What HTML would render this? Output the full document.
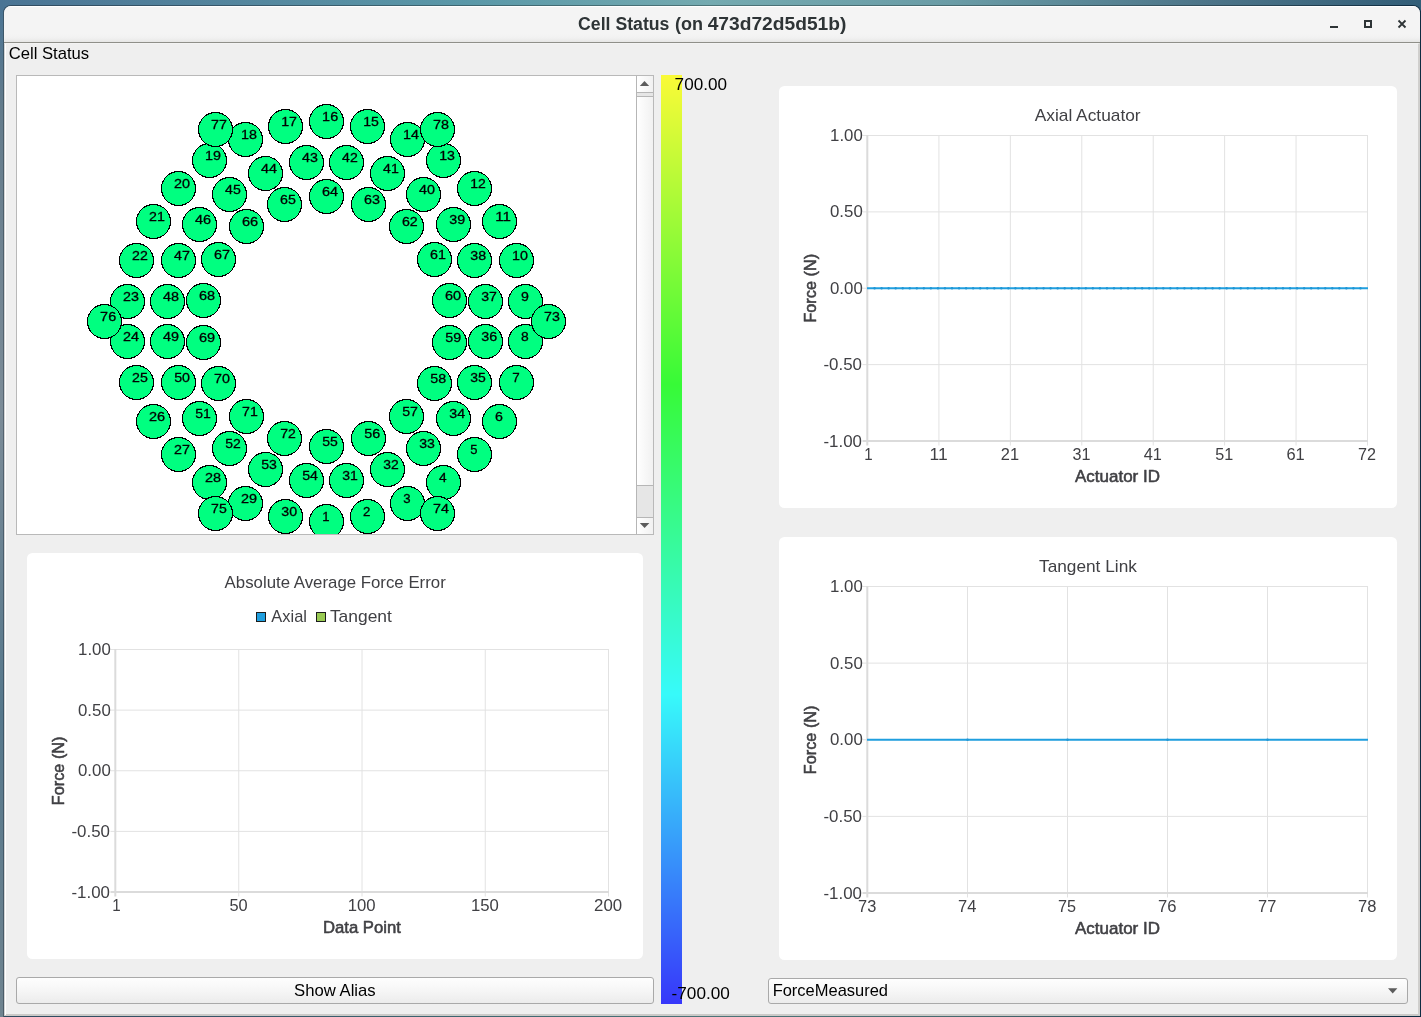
<!DOCTYPE html>
<html lang="en"><head><meta charset="utf-8"><title>Cell Status</title>
<style>
html,body{margin:0;padding:0}
body{width:1421px;height:1017px;overflow:hidden;position:relative;font-family:"Liberation Sans",sans-serif;
 background:linear-gradient(90deg,#4a7494 0%,#54869e 17%,#5a98a8 33%,#74aab0 50%,#6a9ca6 67%,#4c7488 85%,#325e78 100%)}
div,svg,header,main,nav,section{position:absolute;box-sizing:border-box;display:block}
svg{overflow:visible;will-change:transform}
svg text{font-family:"Liberation Sans",sans-serif;white-space:pre}
#leftstrip{left:0;top:6px;width:4px;height:1011px;background:linear-gradient(180deg,#4a7494 0%,#647c8c 10%,#7c8c98 40%,#56788c 70%,#708490 100%)}
#winshadow{left:3px;top:5px;width:1418px;height:1012px;border-radius:8px 8px 0 0;background:linear-gradient(90deg,#304b60 0%,#37576a 17%,#3d6670 33%,#4c7478 50%,#466a70 67%,#304c5a 85%,#0e2c42 100%)}
#winshadow .l{left:0;top:6px;width:1px;height:1006px;background:linear-gradient(180deg,#3a566a 0%,#485c68 10%,#566470 40%,#3c5668 70%,#4c5c68 100%)}
#winshadow .r{left:1417px;top:6px;width:1px;height:1006px;background:#0e2c42}
#winborder{left:1px;top:1px;width:1416px;height:1010px;border-radius:7px 7px 0 0;background:#efefef;overflow:hidden}
#titlebar{left:0;top:0;width:1416px;height:36px;background:linear-gradient(180deg,#fff 0,#fff 1px,#f4f4f4 1.5px,#f4f4f4 28px,#f1f1f1 32px,#e6e6e5 36px)}
#titleline{left:0;top:36px;width:1416px;height:1px;background:#8f8f89}
#client{left:0;top:37px;width:1416px;height:973px;background:#efefef;border-left:1px solid #d4d4d4;border-right:2px solid #d0cfcd;border-bottom:2px solid #cbcac8;border-top:1px solid #f3f3f3}
#client:before{content:"";position:absolute;left:0;top:0;width:1px;height:971px;background:#fff}
#gview{left:11px;top:31px;width:638px;height:460px;border:1px solid #b9b9b9;background:#fff;overflow:hidden}
#vsb{left:619px;top:0;width:17px;height:458px;border-left:1px solid #b6b6b6;background:#e6e6e6}
#vsb .btn{left:0;width:16px;height:16px;background:linear-gradient(90deg,#fff,#f1f1f1)}
#vsb .up{top:0}
#vsb .down{top:442px}
#vsb .ln{left:0;width:16px;height:1px;background:#b6b6b6}
#vsb .slider{left:0;top:20px;width:16px;height:390px;border-top:1px solid #b6b6b6;border-bottom:1px solid #b6b6b6;background:linear-gradient(90deg,#fff,#f1f1f1)}
#cbar{left:656px;top:31px;width:21px;height:929px;background:linear-gradient(180deg,#fafa37 0%,#37fa37 33.333%,#37fafa 66.667%,#3737fa 100%)}
.panel{background:#fff;border-radius:5.5px}
#p1{left:22px;top:509px;width:616px;height:406px}
#p2{left:774px;top:42px;width:618px;height:422px}
#p3{left:774px;top:493px;width:618px;height:423px}
.qbtn{border:1px solid #a9a9a9;border-radius:3px;background:linear-gradient(180deg,#fefefe 0%,#f6f6f6 50%,#ececec 100%)}
#showalias{left:11px;top:933px;width:638px;height:27px}
#combo{left:763px;top:934px;width:640px;height:26px}
#menubar{left:0;top:0;width:1409px;height:23px}
</style></head><body>

<div id="leftstrip"></div>
<div id="winshadow"><div class="l"></div><div class="r"></div><div id="winborder">
<header id="titlebar"><svg role="img" aria-label="Cell Status (on 473d72d5d51b)" style="left:-4px;top:-6px" width="1421" height="1017" viewBox="0 0 1421 1017"><text x="578.07" y="30.00" font-size="18" text-anchor="start" fill="#2e3436" font-weight="bold" textLength="91.35" lengthAdjust="spacingAndGlyphs">Cell Status</text>
<text x="675.00" y="30.00" font-size="18" text-anchor="start" fill="#2e3436" font-weight="bold" textLength="28.01" lengthAdjust="spacingAndGlyphs">(on</text>
<text x="707.71" y="30.00" font-size="18" text-anchor="start" fill="#2e3436" font-weight="bold" textLength="138.65" lengthAdjust="spacingAndGlyphs">473d72d5d51b)</text>
<g class="winbuttons"><rect x="1330" y="26" width="8" height="2" fill="#2e3436"/>
<rect x="1365" y="21" width="6" height="6" fill="none" stroke="#2e3436" stroke-width="2"/>
<path d="M1398.5 20.5 L1405.5 27.5 M1405.5 20.5 L1398.5 27.5" stroke="#2e3436" stroke-width="1.8" fill="none"/></g></svg></header>
<div id="titleline"></div>
<main id="client">
<nav id="menubar"><svg style="left:-5px;top:-44px" width="1421" height="1017" viewBox="0 0 1421 1017"><text x="8.65" y="59.00" font-size="16.6" text-anchor="start" fill="#000" font-weight="normal" textLength="80.55" lengthAdjust="spacingAndGlyphs">Cell Status</text></svg></nav>
<section id="gview">
<svg id="cells" style="left:0;top:0" width="619" height="458" viewBox="17 76 619 458">
<g shape-rendering="crispEdges" fill="#00ff80" stroke="#000" stroke-width="1">
<circle cx="326.5" cy="521.5" r="17"/>
<circle cx="367.5" cy="516.5" r="17"/>
<circle cx="407.5" cy="503.5" r="17"/>
<circle cx="443.5" cy="482.5" r="17"/>
<circle cx="474.5" cy="454.5" r="17"/>
<circle cx="499.5" cy="421.5" r="17"/>
<circle cx="516.5" cy="382.5" r="17"/>
<circle cx="525.5" cy="341.5" r="17"/>
<circle cx="525.5" cy="301.5" r="17"/>
<circle cx="516.5" cy="260.5" r="17"/>
<circle cx="499.5" cy="221.5" r="17"/>
<circle cx="474.5" cy="188.5" r="17"/>
<circle cx="443.5" cy="160.5" r="17"/>
<circle cx="407.5" cy="139.5" r="17"/>
<circle cx="367.5" cy="126.5" r="17"/>
<circle cx="326.5" cy="121.5" r="17"/>
<circle cx="285.5" cy="126.5" r="17"/>
<circle cx="245.5" cy="139.5" r="17"/>
<circle cx="209.5" cy="160.5" r="17"/>
<circle cx="178.5" cy="188.5" r="17"/>
<circle cx="153.5" cy="221.5" r="17"/>
<circle cx="136.5" cy="260.5" r="17"/>
<circle cx="127.5" cy="301.5" r="17"/>
<circle cx="127.5" cy="341.5" r="17"/>
<circle cx="136.5" cy="382.5" r="17"/>
<circle cx="153.5" cy="421.5" r="17"/>
<circle cx="178.5" cy="454.5" r="17"/>
<circle cx="209.5" cy="482.5" r="17"/>
<circle cx="245.5" cy="503.5" r="17"/>
<circle cx="285.5" cy="516.5" r="17"/>
<circle cx="346.5" cy="480.5" r="17"/>
<circle cx="387.5" cy="469.5" r="17"/>
<circle cx="423.5" cy="448.5" r="17"/>
<circle cx="453.5" cy="418.5" r="17"/>
<circle cx="474.5" cy="382.5" r="17"/>
<circle cx="485.5" cy="341.5" r="17"/>
<circle cx="485.5" cy="301.5" r="17"/>
<circle cx="474.5" cy="260.5" r="17"/>
<circle cx="453.5" cy="224.5" r="17"/>
<circle cx="423.5" cy="194.5" r="17"/>
<circle cx="387.5" cy="173.5" r="17"/>
<circle cx="346.5" cy="162.5" r="17"/>
<circle cx="306.5" cy="162.5" r="17"/>
<circle cx="265.5" cy="173.5" r="17"/>
<circle cx="229.5" cy="194.5" r="17"/>
<circle cx="199.5" cy="224.5" r="17"/>
<circle cx="178.5" cy="260.5" r="17"/>
<circle cx="167.5" cy="301.5" r="17"/>
<circle cx="167.5" cy="341.5" r="17"/>
<circle cx="178.5" cy="382.5" r="17"/>
<circle cx="199.5" cy="418.5" r="17"/>
<circle cx="229.5" cy="448.5" r="17"/>
<circle cx="265.5" cy="469.5" r="17"/>
<circle cx="306.5" cy="480.5" r="17"/>
<circle cx="326.5" cy="446.5" r="17"/>
<circle cx="368.5" cy="438.5" r="17"/>
<circle cx="406.5" cy="416.5" r="17"/>
<circle cx="434.5" cy="383.5" r="17"/>
<circle cx="449.5" cy="342.5" r="17"/>
<circle cx="449.5" cy="300.5" r="17"/>
<circle cx="434.5" cy="259.5" r="17"/>
<circle cx="406.5" cy="226.5" r="17"/>
<circle cx="368.5" cy="204.5" r="17"/>
<circle cx="326.5" cy="196.5" r="17"/>
<circle cx="284.5" cy="204.5" r="17"/>
<circle cx="246.5" cy="226.5" r="17"/>
<circle cx="218.5" cy="259.5" r="17"/>
<circle cx="203.5" cy="300.5" r="17"/>
<circle cx="203.5" cy="342.5" r="17"/>
<circle cx="218.5" cy="383.5" r="17"/>
<circle cx="246.5" cy="416.5" r="17"/>
<circle cx="284.5" cy="438.5" r="17"/>
<circle cx="548.5" cy="321.5" r="17"/>
<circle cx="437.5" cy="513.5" r="17"/>
<circle cx="215.5" cy="513.5" r="17"/>
<circle cx="104.5" cy="321.5" r="17"/>
<circle cx="215.5" cy="129.5" r="17"/>
<circle cx="437.5" cy="129.5" r="17"/>
</g>
<g fill="#000" stroke="#000" stroke-width="0.3">
<text x="322.23" y="521.00" font-size="12.9" text-anchor="start" fill="#000" font-weight="normal" textLength="7.28" lengthAdjust="spacingAndGlyphs">1</text>
<text x="363.09" y="516.00" font-size="12.9" text-anchor="start" fill="#000" font-weight="normal" textLength="7.35" lengthAdjust="spacingAndGlyphs">2</text>
<text x="403.29" y="503.00" font-size="12.9" text-anchor="start" fill="#000" font-weight="normal" textLength="7.32" lengthAdjust="spacingAndGlyphs">3</text>
<text x="439.12" y="482.00" font-size="12.9" text-anchor="start" fill="#000" font-weight="normal" textLength="7.62" lengthAdjust="spacingAndGlyphs">4</text>
<text x="470.29" y="454.00" font-size="12.9" text-anchor="start" fill="#000" font-weight="normal" textLength="7.19" lengthAdjust="spacingAndGlyphs">5</text>
<text x="494.99" y="421.00" font-size="12.9" text-anchor="start" fill="#000" font-weight="normal" textLength="7.89" lengthAdjust="spacingAndGlyphs">6</text>
<text x="512.18" y="382.00" font-size="12.9" text-anchor="start" fill="#000" font-weight="normal" textLength="7.46" lengthAdjust="spacingAndGlyphs">7</text>
<text x="521.08" y="341.00" font-size="12.9" text-anchor="start" fill="#000" font-weight="normal" textLength="7.70" lengthAdjust="spacingAndGlyphs">8</text>
<text x="520.96" y="301.00" font-size="12.9" text-anchor="start" fill="#000" font-weight="normal" textLength="7.87" lengthAdjust="spacingAndGlyphs">9</text>
<text x="512.14" y="260.00" font-size="12.9" text-anchor="start" fill="#000" font-weight="normal" textLength="15.90" lengthAdjust="spacingAndGlyphs">10</text>
<text x="495.15" y="221.00" font-size="12.9" text-anchor="start" fill="#000" font-weight="normal" textLength="15.68" lengthAdjust="spacingAndGlyphs">11</text>
<text x="470.16" y="188.00" font-size="12.9" text-anchor="start" fill="#000" font-weight="normal" textLength="15.58" lengthAdjust="spacingAndGlyphs">12</text>
<text x="439.15" y="160.00" font-size="12.9" text-anchor="start" fill="#000" font-weight="normal" textLength="15.78" lengthAdjust="spacingAndGlyphs">13</text>
<text x="403.14" y="139.00" font-size="12.9" text-anchor="start" fill="#000" font-weight="normal" textLength="15.89" lengthAdjust="spacingAndGlyphs">14</text>
<text x="363.16" y="126.00" font-size="12.9" text-anchor="start" fill="#000" font-weight="normal" textLength="15.64" lengthAdjust="spacingAndGlyphs">15</text>
<text x="322.13" y="121.00" font-size="12.9" text-anchor="start" fill="#000" font-weight="normal" textLength="16.03" lengthAdjust="spacingAndGlyphs">16</text>
<text x="281.15" y="126.00" font-size="12.9" text-anchor="start" fill="#000" font-weight="normal" textLength="15.80" lengthAdjust="spacingAndGlyphs">17</text>
<text x="241.14" y="139.00" font-size="12.9" text-anchor="start" fill="#000" font-weight="normal" textLength="15.94" lengthAdjust="spacingAndGlyphs">18</text>
<text x="205.13" y="160.00" font-size="12.9" text-anchor="start" fill="#000" font-weight="normal" textLength="15.97" lengthAdjust="spacingAndGlyphs">19</text>
<text x="174.03" y="188.00" font-size="12.9" text-anchor="start" fill="#000" font-weight="normal" textLength="16.01" lengthAdjust="spacingAndGlyphs">20</text>
<text x="149.04" y="221.00" font-size="12.9" text-anchor="start" fill="#000" font-weight="normal" textLength="15.80" lengthAdjust="spacingAndGlyphs">21</text>
<text x="132.04" y="260.00" font-size="12.9" text-anchor="start" fill="#000" font-weight="normal" textLength="15.71" lengthAdjust="spacingAndGlyphs">22</text>
<text x="123.03" y="301.00" font-size="12.9" text-anchor="start" fill="#000" font-weight="normal" textLength="15.90" lengthAdjust="spacingAndGlyphs">23</text>
<text x="123.03" y="341.00" font-size="12.9" text-anchor="start" fill="#000" font-weight="normal" textLength="16.01" lengthAdjust="spacingAndGlyphs">24</text>
<text x="132.04" y="382.00" font-size="12.9" text-anchor="start" fill="#000" font-weight="normal" textLength="15.76" lengthAdjust="spacingAndGlyphs">25</text>
<text x="149.02" y="421.00" font-size="12.9" text-anchor="start" fill="#000" font-weight="normal" textLength="16.14" lengthAdjust="spacingAndGlyphs">26</text>
<text x="174.03" y="454.00" font-size="12.9" text-anchor="start" fill="#000" font-weight="normal" textLength="15.92" lengthAdjust="spacingAndGlyphs">27</text>
<text x="205.03" y="482.00" font-size="12.9" text-anchor="start" fill="#000" font-weight="normal" textLength="16.05" lengthAdjust="spacingAndGlyphs">28</text>
<text x="241.02" y="503.00" font-size="12.9" text-anchor="start" fill="#000" font-weight="normal" textLength="16.09" lengthAdjust="spacingAndGlyphs">29</text>
<text x="281.25" y="516.00" font-size="12.9" text-anchor="start" fill="#000" font-weight="normal" textLength="15.78" lengthAdjust="spacingAndGlyphs">30</text>
<text x="342.26" y="480.00" font-size="12.9" text-anchor="start" fill="#000" font-weight="normal" textLength="15.57" lengthAdjust="spacingAndGlyphs">31</text>
<text x="383.26" y="469.00" font-size="12.9" text-anchor="start" fill="#000" font-weight="normal" textLength="15.48" lengthAdjust="spacingAndGlyphs">32</text>
<text x="419.25" y="448.00" font-size="12.9" text-anchor="start" fill="#000" font-weight="normal" textLength="15.67" lengthAdjust="spacingAndGlyphs">33</text>
<text x="449.25" y="418.00" font-size="12.9" text-anchor="start" fill="#000" font-weight="normal" textLength="15.78" lengthAdjust="spacingAndGlyphs">34</text>
<text x="470.26" y="382.00" font-size="12.9" text-anchor="start" fill="#000" font-weight="normal" textLength="15.53" lengthAdjust="spacingAndGlyphs">35</text>
<text x="481.25" y="341.00" font-size="12.9" text-anchor="start" fill="#000" font-weight="normal" textLength="15.91" lengthAdjust="spacingAndGlyphs">36</text>
<text x="481.25" y="301.00" font-size="12.9" text-anchor="start" fill="#000" font-weight="normal" textLength="15.69" lengthAdjust="spacingAndGlyphs">37</text>
<text x="470.25" y="260.00" font-size="12.9" text-anchor="start" fill="#000" font-weight="normal" textLength="15.82" lengthAdjust="spacingAndGlyphs">38</text>
<text x="449.25" y="224.00" font-size="12.9" text-anchor="start" fill="#000" font-weight="normal" textLength="15.86" lengthAdjust="spacingAndGlyphs">39</text>
<text x="419.11" y="194.00" font-size="12.9" text-anchor="start" fill="#000" font-weight="normal" textLength="15.93" lengthAdjust="spacingAndGlyphs">40</text>
<text x="383.11" y="173.00" font-size="12.9" text-anchor="start" fill="#000" font-weight="normal" textLength="15.72" lengthAdjust="spacingAndGlyphs">41</text>
<text x="342.11" y="162.00" font-size="12.9" text-anchor="start" fill="#000" font-weight="normal" textLength="15.64" lengthAdjust="spacingAndGlyphs">42</text>
<text x="302.11" y="162.00" font-size="12.9" text-anchor="start" fill="#000" font-weight="normal" textLength="15.82" lengthAdjust="spacingAndGlyphs">43</text>
<text x="261.11" y="173.00" font-size="12.9" text-anchor="start" fill="#000" font-weight="normal" textLength="15.93" lengthAdjust="spacingAndGlyphs">44</text>
<text x="225.11" y="194.00" font-size="12.9" text-anchor="start" fill="#000" font-weight="normal" textLength="15.69" lengthAdjust="spacingAndGlyphs">45</text>
<text x="195.10" y="224.00" font-size="12.9" text-anchor="start" fill="#000" font-weight="normal" textLength="16.05" lengthAdjust="spacingAndGlyphs">46</text>
<text x="174.11" y="260.00" font-size="12.9" text-anchor="start" fill="#000" font-weight="normal" textLength="15.84" lengthAdjust="spacingAndGlyphs">47</text>
<text x="163.11" y="301.00" font-size="12.9" text-anchor="start" fill="#000" font-weight="normal" textLength="15.97" lengthAdjust="spacingAndGlyphs">48</text>
<text x="163.10" y="341.00" font-size="12.9" text-anchor="start" fill="#000" font-weight="normal" textLength="16.00" lengthAdjust="spacingAndGlyphs">49</text>
<text x="174.23" y="382.00" font-size="12.9" text-anchor="start" fill="#000" font-weight="normal" textLength="15.80" lengthAdjust="spacingAndGlyphs">50</text>
<text x="195.24" y="418.00" font-size="12.9" text-anchor="start" fill="#000" font-weight="normal" textLength="15.58" lengthAdjust="spacingAndGlyphs">51</text>
<text x="225.25" y="448.00" font-size="12.9" text-anchor="start" fill="#000" font-weight="normal" textLength="15.50" lengthAdjust="spacingAndGlyphs">52</text>
<text x="261.24" y="469.00" font-size="12.9" text-anchor="start" fill="#000" font-weight="normal" textLength="15.68" lengthAdjust="spacingAndGlyphs">53</text>
<text x="302.23" y="480.00" font-size="12.9" text-anchor="start" fill="#000" font-weight="normal" textLength="15.79" lengthAdjust="spacingAndGlyphs">54</text>
<text x="322.24" y="446.00" font-size="12.9" text-anchor="start" fill="#000" font-weight="normal" textLength="15.55" lengthAdjust="spacingAndGlyphs">55</text>
<text x="364.23" y="438.00" font-size="12.9" text-anchor="start" fill="#000" font-weight="normal" textLength="15.92" lengthAdjust="spacingAndGlyphs">56</text>
<text x="402.24" y="416.00" font-size="12.9" text-anchor="start" fill="#000" font-weight="normal" textLength="15.70" lengthAdjust="spacingAndGlyphs">57</text>
<text x="430.23" y="383.00" font-size="12.9" text-anchor="start" fill="#000" font-weight="normal" textLength="15.84" lengthAdjust="spacingAndGlyphs">58</text>
<text x="445.23" y="342.00" font-size="12.9" text-anchor="start" fill="#000" font-weight="normal" textLength="15.87" lengthAdjust="spacingAndGlyphs">59</text>
<text x="444.97" y="300.00" font-size="12.9" text-anchor="start" fill="#000" font-weight="normal" textLength="16.07" lengthAdjust="spacingAndGlyphs">60</text>
<text x="429.98" y="259.00" font-size="12.9" text-anchor="start" fill="#000" font-weight="normal" textLength="15.85" lengthAdjust="spacingAndGlyphs">61</text>
<text x="401.99" y="226.00" font-size="12.9" text-anchor="start" fill="#000" font-weight="normal" textLength="15.77" lengthAdjust="spacingAndGlyphs">62</text>
<text x="363.98" y="204.00" font-size="12.9" text-anchor="start" fill="#000" font-weight="normal" textLength="15.95" lengthAdjust="spacingAndGlyphs">63</text>
<text x="321.97" y="196.00" font-size="12.9" text-anchor="start" fill="#000" font-weight="normal" textLength="16.06" lengthAdjust="spacingAndGlyphs">64</text>
<text x="279.99" y="204.00" font-size="12.9" text-anchor="start" fill="#000" font-weight="normal" textLength="15.82" lengthAdjust="spacingAndGlyphs">65</text>
<text x="241.97" y="226.00" font-size="12.9" text-anchor="start" fill="#000" font-weight="normal" textLength="16.19" lengthAdjust="spacingAndGlyphs">66</text>
<text x="213.98" y="259.00" font-size="12.9" text-anchor="start" fill="#000" font-weight="normal" textLength="15.98" lengthAdjust="spacingAndGlyphs">67</text>
<text x="198.97" y="300.00" font-size="12.9" text-anchor="start" fill="#000" font-weight="normal" textLength="16.11" lengthAdjust="spacingAndGlyphs">68</text>
<text x="198.97" y="342.00" font-size="12.9" text-anchor="start" fill="#000" font-weight="normal" textLength="16.14" lengthAdjust="spacingAndGlyphs">69</text>
<text x="214.13" y="383.00" font-size="12.9" text-anchor="start" fill="#000" font-weight="normal" textLength="15.90" lengthAdjust="spacingAndGlyphs">70</text>
<text x="242.14" y="416.00" font-size="12.9" text-anchor="start" fill="#000" font-weight="normal" textLength="15.69" lengthAdjust="spacingAndGlyphs">71</text>
<text x="280.15" y="438.00" font-size="12.9" text-anchor="start" fill="#000" font-weight="normal" textLength="15.60" lengthAdjust="spacingAndGlyphs">72</text>
<text x="544.14" y="321.00" font-size="12.9" text-anchor="start" fill="#000" font-weight="normal" textLength="15.79" lengthAdjust="spacingAndGlyphs">73</text>
<text x="433.13" y="513.00" font-size="12.9" text-anchor="start" fill="#000" font-weight="normal" textLength="15.90" lengthAdjust="spacingAndGlyphs">74</text>
<text x="211.14" y="513.00" font-size="12.9" text-anchor="start" fill="#000" font-weight="normal" textLength="15.65" lengthAdjust="spacingAndGlyphs">75</text>
<text x="100.13" y="321.00" font-size="12.9" text-anchor="start" fill="#000" font-weight="normal" textLength="16.03" lengthAdjust="spacingAndGlyphs">76</text>
<text x="211.14" y="129.00" font-size="12.9" text-anchor="start" fill="#000" font-weight="normal" textLength="15.81" lengthAdjust="spacingAndGlyphs">77</text>
<text x="433.13" y="129.00" font-size="12.9" text-anchor="start" fill="#000" font-weight="normal" textLength="15.94" lengthAdjust="spacingAndGlyphs">78</text>
</g></svg>
<div id="vsb"><div class="btn up"></div><div class="ln" style="top:16px"></div><div class="slider"></div><div class="ln" style="top:441px"></div><div class="btn down"></div><svg style="left:0;top:0" width="16" height="458"><path d="M2.8 10 L7.5 4.9 L12.2 10 Z" fill="#5c5c5c"/><path d="M2.8 447 L7.6 452.1 L12.4 447 Z" fill="#5c5c5c"/></svg></div>
</section>
<div id="cbar"><svg style="left:-661px;top:-75px" width="1421" height="1017" viewBox="0 0 1421 1017"><text x="674.62" y="90.00" font-size="16.6" text-anchor="start" fill="#000" font-weight="normal" textLength="52.35" lengthAdjust="spacingAndGlyphs">700.00</text><text x="671.54" y="999.00" font-size="16.6" text-anchor="start" fill="#000" font-weight="normal" textLength="58.34" lengthAdjust="spacingAndGlyphs">-700.00</text></svg></div>
<section class="panel" id="p1"><svg style="left:-27px;top:-553px" width="1421" height="1017" viewBox="0 0 1421 1017"><g class="grid" stroke-width="1" stroke="#e2e2e2">
<line x1="238.75" y1="649.00" x2="238.75" y2="896.50"/>
<line x1="362.00" y1="649.00" x2="362.00" y2="896.50"/>
<line x1="485.25" y1="649.00" x2="485.25" y2="896.50"/>
<line x1="608.50" y1="649.00" x2="608.50" y2="896.50"/>
<line x1="110.50" y1="649.50" x2="609.00" y2="649.50"/>
<line x1="110.50" y1="710.12" x2="609.00" y2="710.12"/>
<line x1="110.50" y1="770.75" x2="609.00" y2="770.75"/>
<line x1="110.50" y1="831.38" x2="609.00" y2="831.38"/>
</g>
<g class="axes" stroke-width="2" stroke="#dbdbdb">
<line x1="115.30" y1="649.00" x2="115.30" y2="896.50"/>
<line x1="110.50" y1="892.00" x2="609.00" y2="892.00"/>
</g>
<g class="labels" fill="#404044">
<text x="78.07" y="655.00" font-size="16.6" text-anchor="start" fill="#404044" font-weight="normal" textLength="32.69" lengthAdjust="spacingAndGlyphs">1.00</text>
<text x="78.03" y="716.00" font-size="16.6" text-anchor="start" fill="#404044" font-weight="normal" textLength="32.73" lengthAdjust="spacingAndGlyphs">0.50</text>
<text x="78.03" y="776.00" font-size="16.6" text-anchor="start" fill="#404044" font-weight="normal" textLength="32.73" lengthAdjust="spacingAndGlyphs">0.00</text>
<text x="71.47" y="837.00" font-size="16.6" text-anchor="start" fill="#404044" font-weight="normal" textLength="38.49" lengthAdjust="spacingAndGlyphs">-0.50</text>
<text x="71.47" y="898.00" font-size="16.6" text-anchor="start" fill="#404044" font-weight="normal" textLength="38.49" lengthAdjust="spacingAndGlyphs">-1.00</text>
<text x="112.13" y="911.00" font-size="16.6" text-anchor="start" fill="#404044" font-weight="normal" textLength="8.40" lengthAdjust="spacingAndGlyphs">1</text>
<text x="229.41" y="911.00" font-size="16.6" text-anchor="start" fill="#404044" font-weight="normal" textLength="18.23" lengthAdjust="spacingAndGlyphs">50</text>
<text x="347.76" y="911.00" font-size="16.6" text-anchor="start" fill="#404044" font-weight="normal" textLength="27.91" lengthAdjust="spacingAndGlyphs">100</text>
<text x="471.01" y="911.00" font-size="16.6" text-anchor="start" fill="#404044" font-weight="normal" textLength="27.91" lengthAdjust="spacingAndGlyphs">150</text>
<text x="594.14" y="911.00" font-size="16.6" text-anchor="start" fill="#404044" font-weight="normal" textLength="28.04" lengthAdjust="spacingAndGlyphs">200</text>
<text x="224.61" y="588.00" font-size="16.6" text-anchor="start" fill="#404044" font-weight="normal" textLength="221.14" lengthAdjust="spacingAndGlyphs">Absolute Average Force Error</text>
<text x="322.92" y="933.00" font-size="16.6" text-anchor="start" fill="#404044" font-weight="normal" textLength="78.02" lengthAdjust="spacingAndGlyphs" stroke="#404044" stroke-width="0.55" stroke-linejoin="round">Data Point</text>
<g transform="translate(64,770.8) rotate(-90)"><text x="-34.43" y="0.00" font-size="16.6" text-anchor="start" fill="#404044" font-weight="normal" textLength="68.72" lengthAdjust="spacingAndGlyphs" stroke="#404044" stroke-width="0.55" stroke-linejoin="round">Force (N)</text></g>
</g>
<g class="legend"><g shape-rendering="crispEdges"><rect x="256.5" y="612.5" width="9" height="9" fill="#209fdf" stroke="#1c1c1c"/><rect x="316.5" y="612.5" width="9" height="9" fill="#99ca53" stroke="#1c1c1c"/></g>
<text x="271.37" y="621.70" font-size="16.6" text-anchor="start" fill="#404044" font-weight="normal" textLength="35.53" lengthAdjust="spacingAndGlyphs">Axial</text>
<text x="329.92" y="621.70" font-size="16.6" text-anchor="start" fill="#404044" font-weight="normal" textLength="62.00" lengthAdjust="spacingAndGlyphs">Tangent</text></g></svg></section>
<section class="panel" id="p2"><svg style="left:-779px;top:-86px" width="1421" height="1017" viewBox="0 0 1421 1017"><g class="grid" stroke-width="1" stroke="#e2e2e2">
<line x1="938.93" y1="135.00" x2="938.93" y2="445.50"/>
<line x1="1010.36" y1="135.00" x2="1010.36" y2="445.50"/>
<line x1="1081.79" y1="135.00" x2="1081.79" y2="445.50"/>
<line x1="1153.21" y1="135.00" x2="1153.21" y2="445.50"/>
<line x1="1224.64" y1="135.00" x2="1224.64" y2="445.50"/>
<line x1="1296.07" y1="135.00" x2="1296.07" y2="445.50"/>
<line x1="1367.50" y1="135.00" x2="1367.50" y2="445.50"/>
<line x1="862.50" y1="135.50" x2="1368.00" y2="135.50"/>
<line x1="862.50" y1="211.88" x2="1368.00" y2="211.88"/>
<line x1="862.50" y1="288.25" x2="1368.00" y2="288.25"/>
<line x1="862.50" y1="364.62" x2="1368.00" y2="364.62"/>
</g>
<g class="axes" stroke-width="2" stroke="#dbdbdb">
<line x1="867.30" y1="135.00" x2="867.30" y2="445.50"/>
<line x1="862.50" y1="441.00" x2="1368.00" y2="441.00"/>
</g>
<g class="series">
<line x1="867.0" y1="288.25" x2="1368.0" y2="288.25" stroke="#209fdf" stroke-width="2"/>
<circle cx="874.54" cy="288.25" r="1.2" fill="#1f97d6"/>
<circle cx="881.58" cy="288.25" r="1.2" fill="#1f97d6"/>
<circle cx="888.63" cy="288.25" r="1.2" fill="#1f97d6"/>
<circle cx="895.67" cy="288.25" r="1.2" fill="#1f97d6"/>
<circle cx="902.71" cy="288.25" r="1.2" fill="#1f97d6"/>
<circle cx="909.75" cy="288.25" r="1.2" fill="#1f97d6"/>
<circle cx="916.80" cy="288.25" r="1.2" fill="#1f97d6"/>
<circle cx="923.84" cy="288.25" r="1.2" fill="#1f97d6"/>
<circle cx="930.88" cy="288.25" r="1.2" fill="#1f97d6"/>
<circle cx="937.92" cy="288.25" r="1.2" fill="#1f97d6"/>
<circle cx="944.96" cy="288.25" r="1.2" fill="#1f97d6"/>
<circle cx="952.01" cy="288.25" r="1.2" fill="#1f97d6"/>
<circle cx="959.05" cy="288.25" r="1.2" fill="#1f97d6"/>
<circle cx="966.09" cy="288.25" r="1.2" fill="#1f97d6"/>
<circle cx="973.13" cy="288.25" r="1.2" fill="#1f97d6"/>
<circle cx="980.18" cy="288.25" r="1.2" fill="#1f97d6"/>
<circle cx="987.22" cy="288.25" r="1.2" fill="#1f97d6"/>
<circle cx="994.26" cy="288.25" r="1.2" fill="#1f97d6"/>
<circle cx="1001.30" cy="288.25" r="1.2" fill="#1f97d6"/>
<circle cx="1008.35" cy="288.25" r="1.2" fill="#1f97d6"/>
<circle cx="1015.39" cy="288.25" r="1.2" fill="#1f97d6"/>
<circle cx="1022.43" cy="288.25" r="1.2" fill="#1f97d6"/>
<circle cx="1029.47" cy="288.25" r="1.2" fill="#1f97d6"/>
<circle cx="1036.51" cy="288.25" r="1.2" fill="#1f97d6"/>
<circle cx="1043.56" cy="288.25" r="1.2" fill="#1f97d6"/>
<circle cx="1050.60" cy="288.25" r="1.2" fill="#1f97d6"/>
<circle cx="1057.64" cy="288.25" r="1.2" fill="#1f97d6"/>
<circle cx="1064.68" cy="288.25" r="1.2" fill="#1f97d6"/>
<circle cx="1071.73" cy="288.25" r="1.2" fill="#1f97d6"/>
<circle cx="1078.77" cy="288.25" r="1.2" fill="#1f97d6"/>
<circle cx="1085.81" cy="288.25" r="1.2" fill="#1f97d6"/>
<circle cx="1092.85" cy="288.25" r="1.2" fill="#1f97d6"/>
<circle cx="1099.89" cy="288.25" r="1.2" fill="#1f97d6"/>
<circle cx="1106.94" cy="288.25" r="1.2" fill="#1f97d6"/>
<circle cx="1113.98" cy="288.25" r="1.2" fill="#1f97d6"/>
<circle cx="1121.02" cy="288.25" r="1.2" fill="#1f97d6"/>
<circle cx="1128.06" cy="288.25" r="1.2" fill="#1f97d6"/>
<circle cx="1135.11" cy="288.25" r="1.2" fill="#1f97d6"/>
<circle cx="1142.15" cy="288.25" r="1.2" fill="#1f97d6"/>
<circle cx="1149.19" cy="288.25" r="1.2" fill="#1f97d6"/>
<circle cx="1156.23" cy="288.25" r="1.2" fill="#1f97d6"/>
<circle cx="1163.27" cy="288.25" r="1.2" fill="#1f97d6"/>
<circle cx="1170.32" cy="288.25" r="1.2" fill="#1f97d6"/>
<circle cx="1177.36" cy="288.25" r="1.2" fill="#1f97d6"/>
<circle cx="1184.40" cy="288.25" r="1.2" fill="#1f97d6"/>
<circle cx="1191.44" cy="288.25" r="1.2" fill="#1f97d6"/>
<circle cx="1198.49" cy="288.25" r="1.2" fill="#1f97d6"/>
<circle cx="1205.53" cy="288.25" r="1.2" fill="#1f97d6"/>
<circle cx="1212.57" cy="288.25" r="1.2" fill="#1f97d6"/>
<circle cx="1219.61" cy="288.25" r="1.2" fill="#1f97d6"/>
<circle cx="1226.65" cy="288.25" r="1.2" fill="#1f97d6"/>
<circle cx="1233.70" cy="288.25" r="1.2" fill="#1f97d6"/>
<circle cx="1240.74" cy="288.25" r="1.2" fill="#1f97d6"/>
<circle cx="1247.78" cy="288.25" r="1.2" fill="#1f97d6"/>
<circle cx="1254.82" cy="288.25" r="1.2" fill="#1f97d6"/>
<circle cx="1261.87" cy="288.25" r="1.2" fill="#1f97d6"/>
<circle cx="1268.91" cy="288.25" r="1.2" fill="#1f97d6"/>
<circle cx="1275.95" cy="288.25" r="1.2" fill="#1f97d6"/>
<circle cx="1282.99" cy="288.25" r="1.2" fill="#1f97d6"/>
<circle cx="1290.04" cy="288.25" r="1.2" fill="#1f97d6"/>
<circle cx="1297.08" cy="288.25" r="1.2" fill="#1f97d6"/>
<circle cx="1304.12" cy="288.25" r="1.2" fill="#1f97d6"/>
<circle cx="1311.16" cy="288.25" r="1.2" fill="#1f97d6"/>
<circle cx="1318.20" cy="288.25" r="1.2" fill="#1f97d6"/>
<circle cx="1325.25" cy="288.25" r="1.2" fill="#1f97d6"/>
<circle cx="1332.29" cy="288.25" r="1.2" fill="#1f97d6"/>
<circle cx="1339.33" cy="288.25" r="1.2" fill="#1f97d6"/>
<circle cx="1346.37" cy="288.25" r="1.2" fill="#1f97d6"/>
<circle cx="1353.42" cy="288.25" r="1.2" fill="#1f97d6"/>
<circle cx="1360.46" cy="288.25" r="1.2" fill="#1f97d6"/>
</g>
<g class="labels" fill="#404044">
<text x="830.07" y="141.00" font-size="16.6" text-anchor="start" fill="#404044" font-weight="normal" textLength="32.69" lengthAdjust="spacingAndGlyphs">1.00</text>
<text x="830.03" y="217.00" font-size="16.6" text-anchor="start" fill="#404044" font-weight="normal" textLength="32.73" lengthAdjust="spacingAndGlyphs">0.50</text>
<text x="830.03" y="294.00" font-size="16.6" text-anchor="start" fill="#404044" font-weight="normal" textLength="32.73" lengthAdjust="spacingAndGlyphs">0.00</text>
<text x="823.47" y="370.00" font-size="16.6" text-anchor="start" fill="#404044" font-weight="normal" textLength="38.49" lengthAdjust="spacingAndGlyphs">-0.50</text>
<text x="823.47" y="447.00" font-size="16.6" text-anchor="start" fill="#404044" font-weight="normal" textLength="38.49" lengthAdjust="spacingAndGlyphs">-1.00</text>
<text x="864.13" y="460.00" font-size="16.6" text-anchor="start" fill="#404044" font-weight="normal" textLength="8.40" lengthAdjust="spacingAndGlyphs">1</text>
<text x="929.49" y="460.00" font-size="16.6" text-anchor="start" fill="#404044" font-weight="normal" textLength="18.09" lengthAdjust="spacingAndGlyphs">11</text>
<text x="1000.79" y="460.00" font-size="16.6" text-anchor="start" fill="#404044" font-weight="normal" textLength="18.23" lengthAdjust="spacingAndGlyphs">21</text>
<text x="1072.47" y="460.00" font-size="16.6" text-anchor="start" fill="#404044" font-weight="normal" textLength="17.96" lengthAdjust="spacingAndGlyphs">31</text>
<text x="1143.73" y="460.00" font-size="16.6" text-anchor="start" fill="#404044" font-weight="normal" textLength="18.14" lengthAdjust="spacingAndGlyphs">41</text>
<text x="1215.31" y="460.00" font-size="16.6" text-anchor="start" fill="#404044" font-weight="normal" textLength="17.98" lengthAdjust="spacingAndGlyphs">51</text>
<text x="1286.44" y="460.00" font-size="16.6" text-anchor="start" fill="#404044" font-weight="normal" textLength="18.29" lengthAdjust="spacingAndGlyphs">61</text>
<text x="1358.06" y="460.00" font-size="16.6" text-anchor="start" fill="#404044" font-weight="normal" textLength="18.00" lengthAdjust="spacingAndGlyphs">72</text>
<text x="1034.71" y="121.40" font-size="16.6" text-anchor="start" fill="#404044" font-weight="normal" textLength="105.95" lengthAdjust="spacingAndGlyphs">Axial Actuator</text>
<text x="1075.06" y="482.00" font-size="16.6" text-anchor="start" fill="#404044" font-weight="normal" textLength="84.90" lengthAdjust="spacingAndGlyphs" stroke="#404044" stroke-width="0.55" stroke-linejoin="round">Actuator ID</text>
<g transform="translate(816,288.2) rotate(-90)"><text x="-34.43" y="0.00" font-size="16.6" text-anchor="start" fill="#404044" font-weight="normal" textLength="68.72" lengthAdjust="spacingAndGlyphs" stroke="#404044" stroke-width="0.55" stroke-linejoin="round">Force (N)</text></g>
</g></svg></section>
<section class="panel" id="p3"><svg style="left:-779px;top:-537px" width="1421" height="1017" viewBox="0 0 1421 1017"><g class="grid" stroke-width="1" stroke="#e2e2e2">
<line x1="967.50" y1="586.00" x2="967.50" y2="897.50"/>
<line x1="1067.50" y1="586.00" x2="1067.50" y2="897.50"/>
<line x1="1167.50" y1="586.00" x2="1167.50" y2="897.50"/>
<line x1="1267.50" y1="586.00" x2="1267.50" y2="897.50"/>
<line x1="1367.50" y1="586.00" x2="1367.50" y2="897.50"/>
<line x1="862.50" y1="586.50" x2="1368.00" y2="586.50"/>
<line x1="862.50" y1="663.12" x2="1368.00" y2="663.12"/>
<line x1="862.50" y1="739.75" x2="1368.00" y2="739.75"/>
<line x1="862.50" y1="816.38" x2="1368.00" y2="816.38"/>
</g>
<g class="axes" stroke-width="2" stroke="#dbdbdb">
<line x1="867.30" y1="586.00" x2="867.30" y2="897.50"/>
<line x1="862.50" y1="893.00" x2="1368.00" y2="893.00"/>
</g>
<g class="series">
<line x1="867.0" y1="739.75" x2="1368.0" y2="739.75" stroke="#209fdf" stroke-width="2"/>
<circle cx="967.50" cy="739.75" r="1.2" fill="#1f97d6"/>
<circle cx="1067.50" cy="739.75" r="1.2" fill="#1f97d6"/>
<circle cx="1167.50" cy="739.75" r="1.2" fill="#1f97d6"/>
<circle cx="1267.50" cy="739.75" r="1.2" fill="#1f97d6"/>
</g>
<g class="labels" fill="#404044">
<text x="830.07" y="592.00" font-size="16.6" text-anchor="start" fill="#404044" font-weight="normal" textLength="32.69" lengthAdjust="spacingAndGlyphs">1.00</text>
<text x="830.03" y="669.00" font-size="16.6" text-anchor="start" fill="#404044" font-weight="normal" textLength="32.73" lengthAdjust="spacingAndGlyphs">0.50</text>
<text x="830.03" y="745.00" font-size="16.6" text-anchor="start" fill="#404044" font-weight="normal" textLength="32.73" lengthAdjust="spacingAndGlyphs">0.00</text>
<text x="823.47" y="822.00" font-size="16.6" text-anchor="start" fill="#404044" font-weight="normal" textLength="38.49" lengthAdjust="spacingAndGlyphs">-0.50</text>
<text x="823.47" y="899.00" font-size="16.6" text-anchor="start" fill="#404044" font-weight="normal" textLength="38.49" lengthAdjust="spacingAndGlyphs">-1.00</text>
<text x="858.05" y="912.00" font-size="16.6" text-anchor="start" fill="#404044" font-weight="normal" textLength="18.21" lengthAdjust="spacingAndGlyphs">73</text>
<text x="958.04" y="912.00" font-size="16.6" text-anchor="start" fill="#404044" font-weight="normal" textLength="18.34" lengthAdjust="spacingAndGlyphs">74</text>
<text x="1058.05" y="912.00" font-size="16.6" text-anchor="start" fill="#404044" font-weight="normal" textLength="18.06" lengthAdjust="spacingAndGlyphs">75</text>
<text x="1158.03" y="912.00" font-size="16.6" text-anchor="start" fill="#404044" font-weight="normal" textLength="18.49" lengthAdjust="spacingAndGlyphs">76</text>
<text x="1258.05" y="912.00" font-size="16.6" text-anchor="start" fill="#404044" font-weight="normal" textLength="18.24" lengthAdjust="spacingAndGlyphs">77</text>
<text x="1358.04" y="912.00" font-size="16.6" text-anchor="start" fill="#404044" font-weight="normal" textLength="18.40" lengthAdjust="spacingAndGlyphs">78</text>
<text x="1039.03" y="571.80" font-size="16.6" text-anchor="start" fill="#404044" font-weight="normal" textLength="97.84" lengthAdjust="spacingAndGlyphs">Tangent Link</text>
<text x="1075.06" y="934.00" font-size="16.6" text-anchor="start" fill="#404044" font-weight="normal" textLength="84.90" lengthAdjust="spacingAndGlyphs" stroke="#404044" stroke-width="0.55" stroke-linejoin="round">Actuator ID</text>
<g transform="translate(816,739.8) rotate(-90)"><text x="-34.43" y="0.00" font-size="16.6" text-anchor="start" fill="#404044" font-weight="normal" textLength="68.72" lengthAdjust="spacingAndGlyphs" stroke="#404044" stroke-width="0.55" stroke-linejoin="round">Force (N)</text></g>
</g></svg></section>
<div class="qbtn" id="showalias" role="button"><svg style="left:-17px;top:-978px" width="1421" height="1017" viewBox="0 0 1421 1017"><text x="294.05" y="996.00" font-size="16.6" text-anchor="start" fill="#000" font-weight="normal" textLength="81.65" lengthAdjust="spacingAndGlyphs">Show Alias</text></svg></div>
<div class="qbtn" id="combo" role="combobox"><svg style="left:-769px;top:-979px" width="1421" height="1017" viewBox="0 0 1421 1017"><text x="772.65" y="996.00" font-size="16.6" text-anchor="start" fill="#000" font-weight="normal" textLength="115.41" lengthAdjust="spacingAndGlyphs">ForceMeasured</text><path d="M1388 988.3 L1397.4 988.3 L1392.7 993.6 Z" fill="#5c5c5c"/></svg></div>
</main>
</div></div>
</body></html>
